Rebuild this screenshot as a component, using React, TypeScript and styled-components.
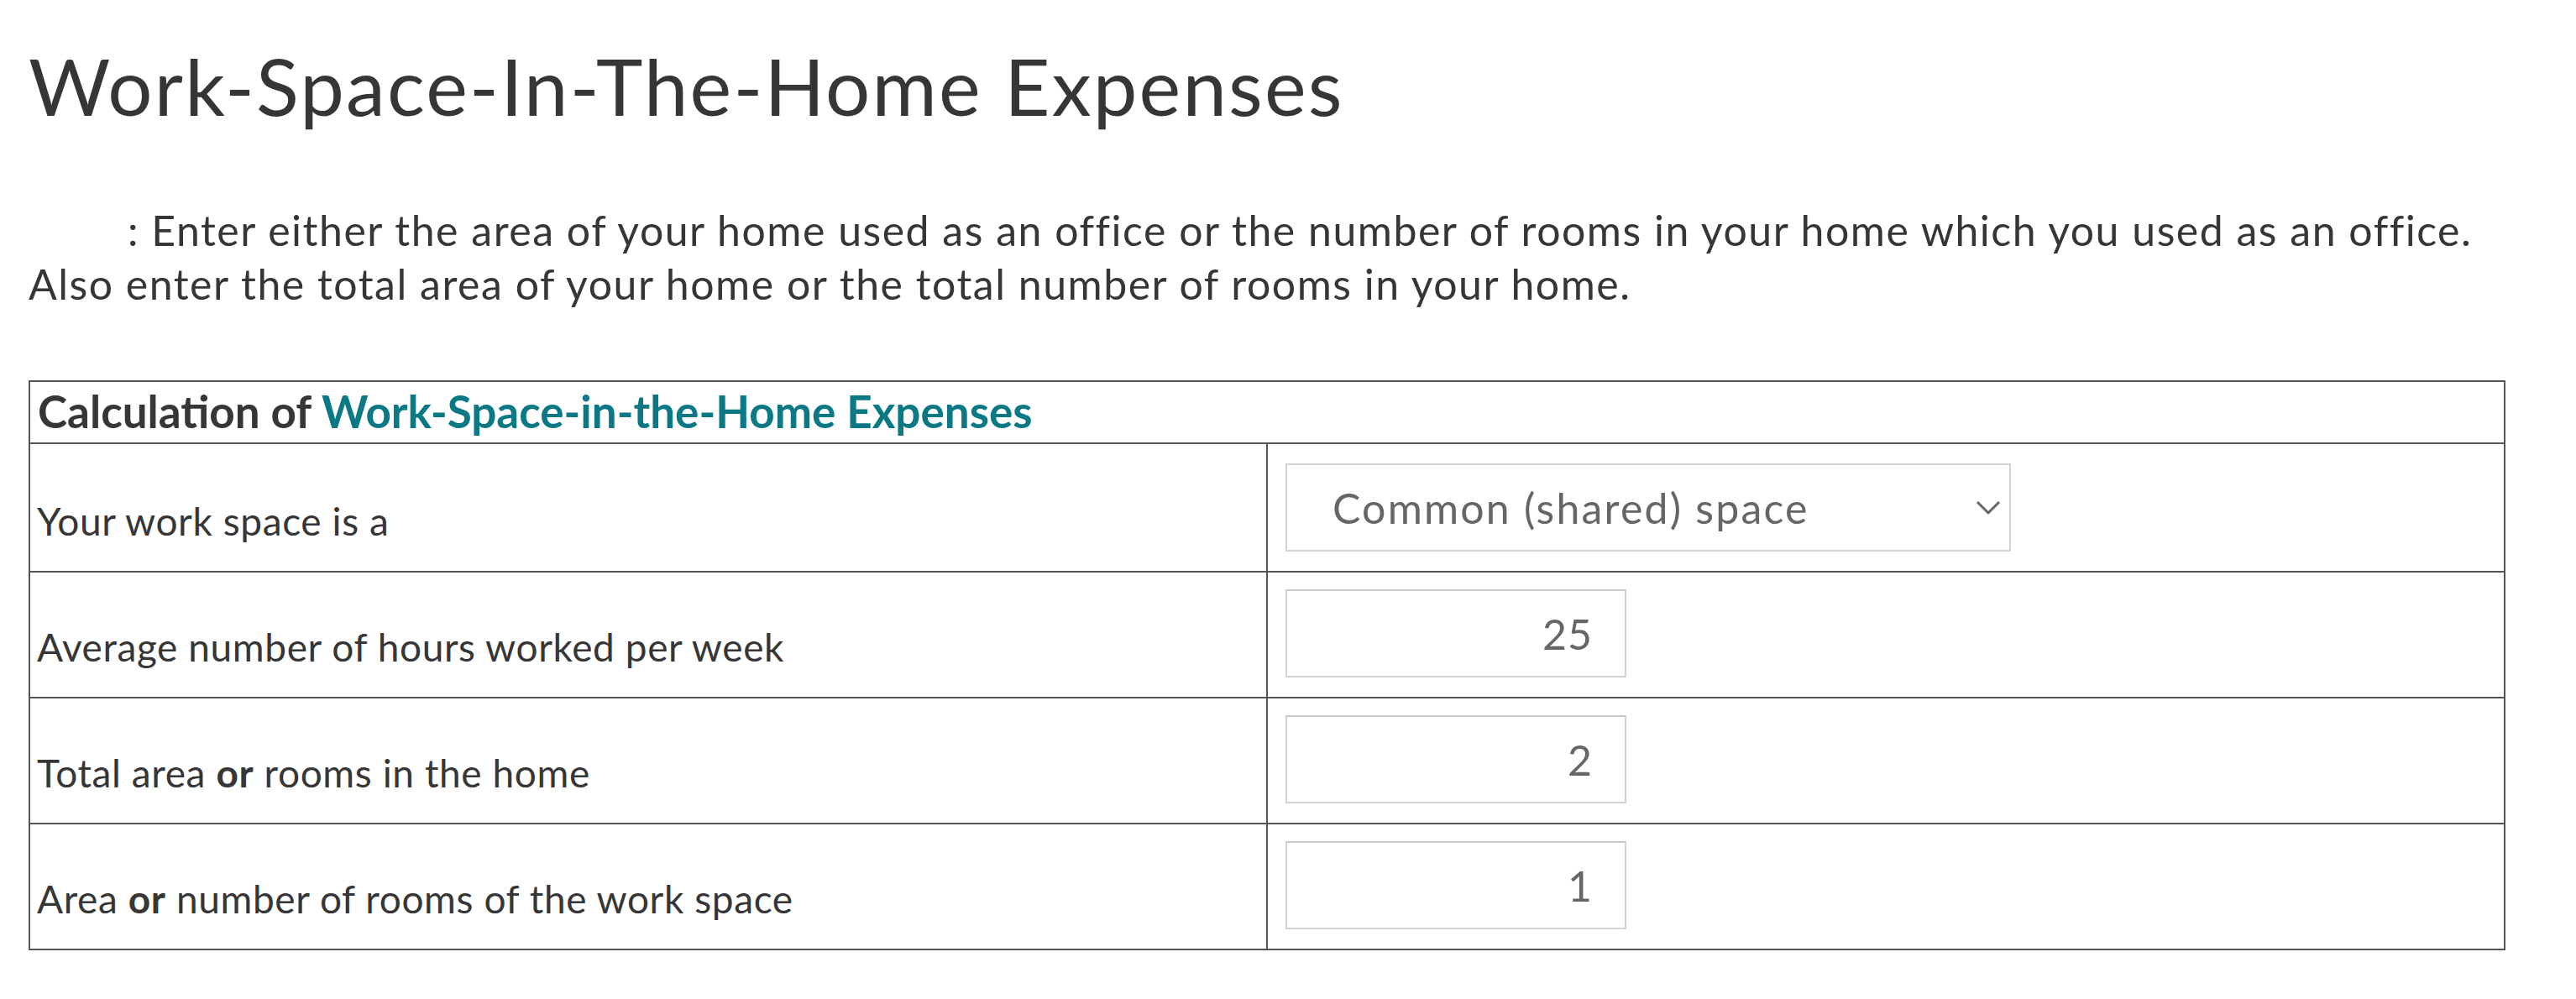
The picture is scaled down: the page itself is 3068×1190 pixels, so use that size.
import React, { useState } from "react";
import styled, { createGlobalStyle } from "styled-components";

const GlobalStyle = createGlobalStyle`
  body {
    margin: 0;
    background: #fff;
    color: #363636;
    font-family: Lato, "Noto Sans", sans-serif;
  }
`;

const Page = styled.div`
  padding: 0 34px;
  width: 2950px;
`;

const Title = styled.h1`
  margin: 45px 0 0;
  font-size: 94px;
  font-weight: 400;
  line-height: 113px;
  letter-spacing: 2.2px;
  color: #363636;
`;

const Intro = styled.p`
  margin: 84px 0 0;
  font-size: 50px;
  line-height: 64px;
  letter-spacing: 1.5px;
  text-indent: 118px;
  white-space: nowrap;
`;

const Sheet = styled.table`
  margin-top: 83px;
  width: 2950px;
  border-collapse: collapse;
  table-layout: fixed;

  td {
    border: 2px solid #555;
  }
`;

const HeadCell = styled.td`
  padding: 0 9px 2px;
  font-size: 53px;
  font-weight: 700;
  line-height: 70px;
  color: #363636;
`;

const Accent = styled.span`
  color: #0b7886;
`;

const Label = styled.td`
  width: 50%;
  padding: 0 8px 31px;
  vertical-align: bottom;
  font-size: 46px;
  line-height: 56px;
  letter-spacing: 0.6px;

  strong {
    font-weight: 700;
  }
`;

const Field = styled.td<{ $top: number; $bottom: number }>`
  padding: ${(p) => p.$top}px 21px ${(p) => p.$bottom}px;
  vertical-align: top;
`;

const SelectWrap = styled.div`
  position: relative;
  width: 864px;
  height: 105px;
`;

const Select = styled.select`
  appearance: none;
  box-sizing: border-box;
  width: 100%;
  height: 100%;
  padding: 0 0 0 54px;
  border: 2px solid #d2d2d2;
  border-radius: 0;
  background: #fff;
  color: #666;
  font-family: Lato, "Noto Sans", sans-serif;
  font-size: 50px;
  letter-spacing: 2.2px;
  outline: none;
`;

const Chevron = styled.svg`
  position: absolute;
  right: 12px;
  top: 44px;
  pointer-events: none;
`;

const NumberInput = styled.input`
  box-sizing: border-box;
  width: 406px;
  height: 105px;
  padding: 0 38px 0 0;
  border: 2px solid #d2d2d2;
  border-top-color: #c9c9c9;
  border-radius: 0;
  color: #666;
  font-family: Lato, "Noto Sans", sans-serif;
  font-size: 50px;
  letter-spacing: 1px;
  text-align: right;
  outline: none;
`;

const App: React.FC = () => {
  const [space, setSpace] = useState("common");
  const [hours, setHours] = useState("25");
  const [total, setTotal] = useState("2");
  const [area, setArea] = useState("1");

  return (
    <Page>
      <GlobalStyle />
      <Title>Work-Space-In-The-Home Expenses</Title>
      <Intro>
        : Enter either the area of your home used as an office or the number of
        rooms in your home which you used as an office.
        <br />
        Also enter the total area of your home or the total number of rooms in
        your home.
      </Intro>
      <Sheet>
        <tbody>
          <tr>
            <HeadCell colSpan={2}>
              Calculation of <Accent>Work-Space-in-the-Home Expenses</Accent>
            </HeadCell>
          </tr>
          <tr>
            <Label>Your work space is a</Label>
            <Field $top={23} $bottom={23}>
              <SelectWrap>
                <Select value={space} onChange={(e) => setSpace(e.target.value)}>
                  <option value="common">Common (shared) space</option>
                  <option value="exclusive">Exclusive space</option>
                </Select>
                <Chevron width="30" height="18" viewBox="0 0 30 18">
                  <polyline
                    points="2,2 15,15 28,2"
                    fill="none"
                    stroke="#666"
                    strokeWidth="3"
                  />
                </Chevron>
              </SelectWrap>
            </Field>
          </tr>
          <tr>
            <Label>Average number of hours worked per week</Label>
            <Field $top={20} $bottom={23}>
              <NumberInput value={hours} onChange={(e) => setHours(e.target.value)} />
            </Field>
          </tr>
          <tr>
            <Label>
              Total area <strong>or</strong> rooms in the home
            </Label>
            <Field $top={20} $bottom={23}>
              <NumberInput value={total} onChange={(e) => setTotal(e.target.value)} />
            </Field>
          </tr>
          <tr>
            <Label>
              Area <strong>or</strong> number of rooms of the work space
            </Label>
            <Field $top={20} $bottom={23}>
              <NumberInput value={area} onChange={(e) => setArea(e.target.value)} />
            </Field>
          </tr>
        </tbody>
      </Sheet>
    </Page>
  );
};

export default App;
